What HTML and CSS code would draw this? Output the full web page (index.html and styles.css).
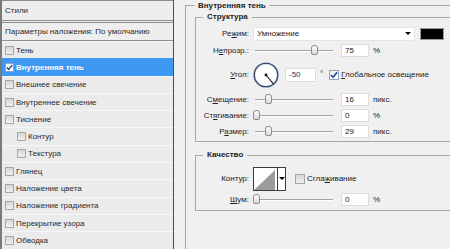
FILE: index.html
```html
<!DOCTYPE html>
<html lang="ru">
<head>
<meta charset="utf-8">
<title>Стиль слоя</title>
<link rel="stylesheet" href="styles.css">
</head>
<body>
<div class="dlg">
  <aside class="styles">
    <div class="head h1">Стили</div>
    <div class="head h2">Параметры наложения: По умолчанию</div>
    <ul class="list">
      <li><span class="cb"></span>Тень</li>
      <li class="sel"><span class="cb on"><svg viewBox="0 0 9 9" width="7" height="7"><path d="M1 4.5 L3.5 7 L8 1.5" fill="none" stroke="#22449a" stroke-width="1.8"/></svg></span>Внутренняя тень</li>
      <li><span class="cb"></span>Внешнее свечение</li>
      <li><span class="cb"></span>Внутреннее свечение</li>
      <li><span class="cb"></span>Тиснение</li>
      <li class="sub"><span class="cb"></span>Контур</li>
      <li class="sub"><span class="cb"></span>Текстура</li>
      <li><span class="cb"></span>Глянец</li>
      <li><span class="cb"></span>Наложение цвета</li>
      <li><span class="cb"></span>Наложение градиента</li>
      <li><span class="cb"></span>Перекрытие узора</li>
      <li><span class="cb"></span>Обводка</li>
    </ul>
  </aside>
  <main class="pane">
    <fieldset class="grp outer">
      <legend>Внутренняя тень</legend>
      <fieldset class="grp inner">
        <legend>Структура</legend>
        <div class="row h17">
          <span class="lbl">Ре<u>ж</u>им:</span>
          <div class="select"><span>Умножение</span><span class="arrow"></span></div>
          <span class="swatch"></span>
        </div>
        <div class="row h16">
          <span class="lbl">Н<u>е</u>прозр.:</span>
          <div class="slider"><span class="th" style="left:61px"></span></div>
          <span class="inp">75</span><span class="unit">%</span>
        </div>
        <div class="row h33">
          <span class="lbl"><u>У</u>гол:</span>
          <svg class="dial" width="26" height="26" viewBox="0 0 26 26">
            <circle cx="13" cy="13" r="11.8" fill="#fff" stroke="#c3d1ea" stroke-width="2.6"/>
            <circle cx="13" cy="13" r="11.8" fill="none" stroke="#2c3655" stroke-width="1.1"/>
            <line x1="13" y1="13" x2="20.4" y2="21.8" stroke="#1a1a1a" stroke-width="1.1"/>
            <circle cx="13" cy="13" r="1.4" fill="#111"/>
          </svg>
          <span class="inp wide">-50</span><span class="deg">°</span>
          <span class="cb on big"><svg viewBox="0 0 9 9" width="8" height="8"><path d="M1 4.5 L3.5 7 L8 1.5" fill="none" stroke="#22449a" stroke-width="1.8"/></svg></span>
          <span class="cbl"><u>Г</u>лобальное освещение</span>
        </div>
        <div class="row h16">
          <span class="lbl">С<u>м</u>ещение:</span>
          <div class="slider"><span class="th" style="left:15px"></span></div>
          <span class="inp">16</span><span class="unit">пикс.</span>
        </div>
        <div class="row h16">
          <span class="lbl">Ст<u>я</u>гивание:</span>
          <div class="slider"><span class="th" style="left:3px"></span></div>
          <span class="inp">0</span><span class="unit">%</span>
        </div>
        <div class="row h16">
          <span class="lbl">Р<u>а</u>змер:</span>
          <div class="slider"><span class="th" style="left:15px"></span></div>
          <span class="inp">29</span><span class="unit">пикс.</span>
        </div>
      </fieldset>
      <fieldset class="grp inner q">
        <legend>Качество</legend>
        <div class="row h27">
          <span class="lbl">Контур:</span>
          <div class="contour">
            <svg width="23" height="22" viewBox="0 0 23 22"><rect width="23" height="22" fill="#fff"/><polygon points="0,22 21,2 21,22" fill="#9b9b9b"/></svg>
            <span class="btn"><span class="arrow"></span></span>
          </div>
          <span class="cb big"></span>
          <span class="cbl">Сгла<u>ж</u>ивание</span>
        </div>
        <div class="row h14">
          <span class="lbl"><u>Ш</u>ум:</span>
          <div class="slider"><span class="th" style="left:3px"></span></div>
          <span class="inp">0</span><span class="unit">%</span>
        </div>
      </fieldset>
    </fieldset>
  </main>
</div>
</body>
</html>
```

FILE: styles.css
```css
* { box-sizing: border-box; }
html, body { margin: 0; padding: 0; }
body {
  width: 450px;
  height: 249px;
  overflow: hidden;
  background: #f0f0f0;
  font-family: "Liberation Sans", Arial, sans-serif;
  font-size: 8px;
  color: #222;
}
.dlg { display: flex; height: 249px; }

/* left list */
.styles {
  width: 174px;
  flex: none;
  border-left: 2px solid #7a7a7a;
  border-right: 1px solid #4e4e4e;
  background: #ebebeb;
  display: flex;
  flex-direction: column;
  color: #2a2a2a;
}
.head {
  border-top: 1px solid #8e8e8e;
  border-bottom: 1px solid #8e8e8e;
  background: #eeeeee;
  display: flex;
  align-items: center;
  padding-left: 3px;
  white-space: nowrap;
  overflow: hidden;
}
.head.h1 { height: 21px; margin-bottom: 1px; }
.head.h2 { height: 19px; }
.list { list-style: none; margin: 0; padding: 0; }
.list li {
  height: 17.3px;
  display: flex;
  align-items: center;
  gap: 2px;
  padding-left: 3px;
  border-top: 1px solid #f7f7f7;
  white-space: nowrap;
}
.list li.sub { padding-left: 15px; }
.list li.sel { background: #3d98f4; color: #fff; font-weight: bold; border-top-color: #3d98f4; }

.cb {
  width: 9px;
  height: 9px;
  flex: none;
  border: 1px solid #a6a6a6;
  background: linear-gradient(#d6d6d6, #f0f0f0);
  display: flex;
  align-items: center;
  justify-content: center;
}
.cb.on { background: linear-gradient(#f4f4f4, #ffffff); border-color: #8fa3c6; }
.cb.big { width: 10px; height: 10px; }

/* right pane */
.pane { flex: 1; min-width: 0; padding-left: 11px; overflow: hidden; }
.grp { margin: 0; border: 1px solid #a8a8a8; min-width: 0; }
.grp > legend { font-weight: bold; padding: 0 3px; line-height: 11px; }
.outer { width: 290px; height: 262px; padding: 0 0 0 9px; }
.inner { padding: 2px 0 2px 7px; }
.inner > legend { padding: 0 4px; line-height: 12px; }
.q { margin-top: 7px; padding-top: 4px; padding-bottom: 4px; }

.row { display: flex; align-items: center; white-space: nowrap; }
.h14 { height: 14px; }
.h16 { height: 16px; }
.h17 { height: 17px; }
.h27 { height: 27px; }
.h33 { height: 33px; }
.lbl { width: 46px; flex: none; text-align: right; margin-right: 4px; }

.select {
  width: 162px;
  height: 14px;
  flex: none;
  background: #fff;
  border: 1px solid #e4e4e4;
  padding-left: 3px;
  display: flex;
  align-items: center;
}
.arrow {
  width: 0;
  height: 0;
  border-left: 3px solid transparent;
  border-right: 3px solid transparent;
  border-top: 3px solid #000;
}
.select .arrow { margin-left: auto; margin-right: 3px; }
.swatch {
  width: 24px;
  height: 12px;
  flex: none;
  margin-left: 5px;
  background: #000;
  border: 1px solid #9c9c9c;
}

.slider { width: 84px; height: 14px; flex: none; position: relative; }
.slider::before {
  content: "";
  position: absolute;
  left: 2px;
  right: 4px;
  top: 7px;
  height: 1px;
  background: #a3a3a3;
  box-shadow: 0 1px 0 #fff;
}
.th {
  position: absolute;
  top: 2px;
  width: 7px;
  height: 10px;
  margin-left: -3.5px;
  border: 1px solid #8c8c8c;
  border-radius: 3px 3px 2px 2px;
  background: linear-gradient(#ffffff, #d9d9d9);
}

.inp {
  width: 28px;
  height: 13px;
  flex: none;
  margin-left: 4px;
  background: #fff;
  border: 1px solid #dcdcdc;
  padding-left: 3px;
  line-height: 11px;
}
.inp.wide { width: 31px; height: 14px; margin-left: 6px; line-height: 12px; color: #2b3a5c; }
.unit { margin-left: 4px; }
.deg { margin-left: 4px; margin-right: 6px; align-self: flex-start; margin-top: 11px; }
.dial { flex: none; overflow: visible; }
.cbl { margin-left: 2px; }

.contour {
  display: flex;
  flex: none;
  height: 24px;
  border: 1px solid #3a3a3a;
}
.contour svg { display: block; }
.contour .btn {
  width: 8px;
  border-left: 1px solid #3a3a3a;
  background: #fff;
  display: flex;
  align-items: center;
  justify-content: center;
}
.contour + .cb { margin-left: 9px; }
```
